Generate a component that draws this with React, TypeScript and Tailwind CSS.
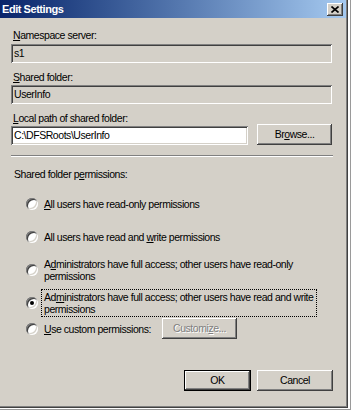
import React from "react";

const raised =
  "shadow-[inset_-1px_-1px_#404040,inset_1px_1px_#ffffff,inset_-2px_-2px_#808080,inset_2px_2px_#d4d0c8]";
const sunken =
  "shadow-[inset_1px_1px_#808080,inset_-1px_-1px_#ffffff,inset_2px_2px_#404040,inset_-2px_-2px_#d4d0c8]";

function Radio({ checked = false }: { checked?: boolean }) {
  return (
    <div
      className={`w-[12px] h-[12px] shrink-0 rounded-full bg-white flex items-center justify-center ${sunken}`}
    >
      {checked && <div className="w-[4px] h-[4px] rounded-full bg-black"></div>}
    </div>
  );
}

function Option({
  children,
  checked = false,
  focused = false,
}: {
  children: React.ReactNode;
  checked?: boolean;
  focused?: boolean;
}) {
  return (
    <div className="flex items-center pl-[15px]">
      <Radio checked={checked} />
      <div
        className={`ml-[3px] w-[276px] px-[2px] py-[1px] leading-[12px] whitespace-nowrap border ${
          focused ? "border-dotted border-black" : "border-transparent"
        }`}
      >
        {children}
      </div>
    </div>
  );
}

export default function App() {
  return (
    <div className="w-[354px] h-[412px] bg-white relative overflow-hidden font-['Liberation_Sans',Arial,sans-serif] text-[10.5px] tracking-[-0.45px] text-black">
      {/* dialog window */}
      <div className="w-[348px] h-[408px] bg-[#d4d0c8] flex flex-col shadow-[inset_-1px_-1px_#404040,inset_-2px_-2px_#808080]">
        {/* title bar */}
        <div className="h-[18px] mr-[2px] bg-linear-to-r from-[#0a246a] to-[#a6caf0] flex items-center justify-between pl-[2px] pr-[3px]">
          <span className="text-white font-bold text-[11px] leading-[12px]">Edit Settings</span>
          <div className={`w-[16px] h-[13px] bg-[#d4d0c8] flex items-center justify-center ${raised}`}>
            <svg width="8" height="7" viewBox="0 0 8 7">
              <path d="M0.5 0.5 L7.5 6.5 M7.5 0.5 L0.5 6.5" stroke="#000" strokeWidth="1.6" />
            </svg>
          </div>
        </div>

        <div className="flex flex-col pl-[11px] pr-[16px]">
          <div className="mt-[11px] leading-[12px] pl-[2px]">
            <u>N</u>amespace server:
          </div>
          <div className={`mt-[3px] h-[19px] flex items-center px-[3px] ${sunken}`}>s1</div>

          <div className="mt-[8px] leading-[12px] pl-[2px]">
            <u>S</u>hared folder:
          </div>
          <div className={`mt-[2px] h-[19px] flex items-center px-[3px] ${sunken}`}>UserInfo</div>

          <div className="mt-[8px] leading-[12px] pl-[2px]">
            <u>L</u>ocal path of shared folder:
          </div>
          <div className="flex items-start gap-[9px]">
            <div className={`mt-[2px] w-[239px] h-[19px] bg-white flex items-center px-[3px] ${sunken}`}>
              C:\DFSRoots\UserInfo
            </div>
            <div className={`w-[75px] h-[21px] shrink-0 flex items-center justify-center ${raised}`}>
              Br<u>o</u>wse...
            </div>
          </div>

          <div className="mt-[10px] w-[322px] border-t border-t-[#808080] border-b border-b-white"></div>

          <div className="mt-[11px] leading-[12px] pl-[3px]">
            Shared folder p<u>e</u>rmissions:
          </div>

          <div className="mt-[16px]">
            <Option>
              <u>A</u>ll users have read-only permissions
            </Option>
          </div>
          <div className="mt-[17px]">
            <Option>
              All users have read and <u>w</u>rite permissions
            </Option>
          </div>
          <div className="mt-[11px]">
            <Option>
              A<u>d</u>ministrators have full access; other users have read-only
              <br />
              permissions
            </Option>
          </div>
          <div className="mt-[5px]">
            <Option checked focused>
              Ad<u>m</u>inistrators have full access; other users have read and write
              <br />
              permissions
            </Option>
          </div>
          <div className="mt-[1px] flex items-center pl-[15px]">
            <Radio />
            <div className="ml-[6px] w-[118px] leading-[12px] whitespace-nowrap">
              <u>U</u>se custom permissions:
            </div>
            <div
              className={`w-[75px] h-[21px] flex items-center justify-center text-[#808080] [text-shadow:1px_1px_0_#ffffff] ${raised}`}
            >
              Customi<u>z</u>e...
            </div>
          </div>

          <div className="mt-[31px] flex justify-end gap-[6px] -mr-[1px]">
            <div className="w-[67px] h-[21px] border border-black">
              <div className={`w-full h-full flex items-center justify-center ${raised}`}>OK</div>
            </div>
            <div className={`w-[76px] h-[21px] flex items-center justify-center ${raised}`}>Cancel</div>
          </div>
        </div>
      </div>
      {/* shadow strips to the right and below */}
      <div className="absolute left-[350px] top-0 w-[1px] h-[410px] bg-[#9a9a9a]"></div>
      <div className="absolute left-0 top-[409px] w-[351px] h-[1px] bg-[#9a9a9a]"></div>
    </div>
  );
}
